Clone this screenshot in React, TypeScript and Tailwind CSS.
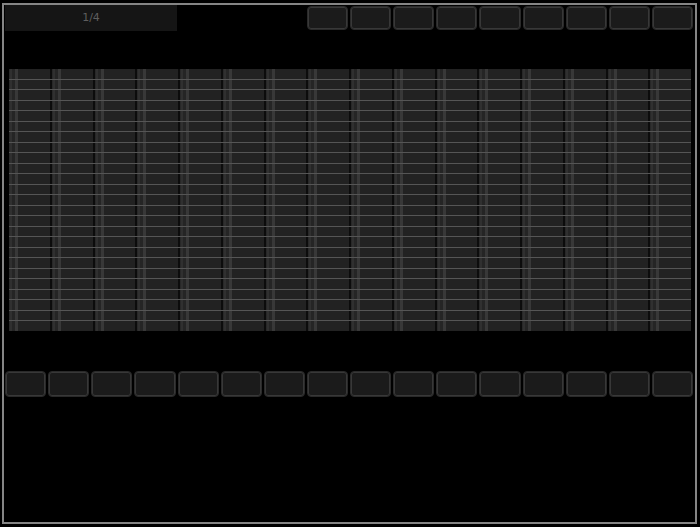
const TOP_BUTTONS = 9
const BOTTOM_BUTTONS = 16
const COLUMNS = 16
const ROWS = 25

function Pad({ className = '' }: { className?: string }) {
  return (
    <div
      className={`flex-1 rounded-[4px] border border-[#2a2a2a] bg-[#1b1b1b] shadow-[inset_0_0_0_1px_#383838] ${className}`}
    />
  )
}

export default function App() {
  return (
    <div className="w-[700px] h-[527px] bg-black pt-[3px] pl-[2px] font-['DejaVu_Sans',sans-serif]">
      <div className="w-[695px] h-[521px] border-2 border-[#858585] flex flex-col">
        {/* Header */}
        <div className="flex items-start h-[26px]">
          <div className="ml-[1px] w-[172px] h-[26px] bg-[#151515] flex items-center justify-center text-[11px] text-[#5e5e5e]">
            1/4
          </div>
          <div className="ml-auto mr-[2px] mt-[1px] w-[386px] h-[24px] flex gap-[2px]">
            {Array.from({ length: TOP_BUTTONS }).map((_, i) => (
              <Pad key={i} />
            ))}
          </div>
        </div>

        {/* Grid */}
        <div className="relative mt-[38px] ml-[5px] w-[682px] h-[262px] flex gap-[2px] bg-[#0c0c0c]">
          {Array.from({ length: COLUMNS }).map((_, i) => (
            <div
              key={i}
              className="flex-1 bg-[linear-gradient(to_right,#282828_0_1px,#303030_1px_3px,#252525_3px_6px,#383838_6px_9px,#222222_9px_100%)]"
            />
          ))}
          <div className="absolute inset-0 flex flex-col">
            {Array.from({ length: ROWS }).map((_, i) => (
              <div
                key={i}
                className={`flex-1 ${i < ROWS - 1 ? 'border-b border-[#555555]' : ''}`}
              />
            ))}
          </div>
        </div>

        {/* Bottom pads */}
        <div className="mt-[40px] ml-[1px] w-[688px] h-[26px] flex gap-[2px]">
          {Array.from({ length: BOTTOM_BUTTONS }).map((_, i) => (
            <Pad key={i} />
          ))}
        </div>
      </div>
    </div>
  )
}
